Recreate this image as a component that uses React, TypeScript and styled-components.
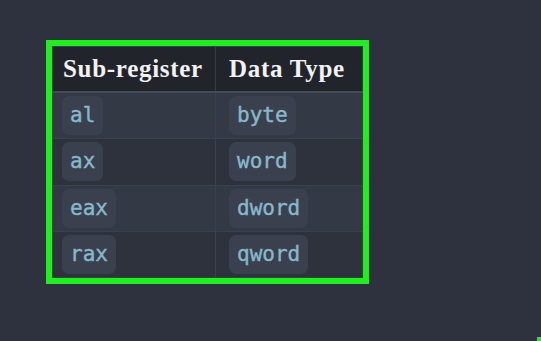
import styled, { createGlobalStyle } from "styled-components";

const GlobalStyle = createGlobalStyle`
  html, body {
    margin: 0;
    background: #2d323e;
  }
`;

const Page = styled.div`
  width: 541px;
  height: 341px;
  box-sizing: border-box;
  padding: 40px 0 0 46px;
  position: relative;
`;

const Frame = styled.div`
  display: inline-block;
  border: 6px solid #1cf21a;
`;

const Table = styled.table`
  border-collapse: collapse;
  border: 1px solid #3b4150;
`;

const HeadCell = styled.th<{ $first?: boolean }>`
  background: #21242b;
  color: #f2f2f2;
  font-family: "Liberation Serif", serif;
  font-weight: bold;
  font-size: 25px;
  letter-spacing: 0.7px;
  text-align: left;
  height: 44px;
  padding: 0 ${(p) => (p.$first ? "10px" : "12px 0 13px")};
  border-bottom: 2px solid #434a59;
  border-right: 1px solid #363c48;
  white-space: nowrap;
`;

const Row = styled.tr<{ $odd: boolean }>`
  background: ${(p) => (p.$odd ? "#343946" : "#2e323d")};
  border-bottom: 1px solid #3a404d;
`;

const Cell = styled.td<{ $first?: boolean }>`
  height: 45.3px;
  padding: 0 ${(p) => (p.$first ? "9px" : "13px")};
  border-right: 1px solid #3a404d;
  vertical-align: middle;
  width: ${(p) => (p.$first ? "144px" : "120px")};
`;

const Code = styled.code`
  display: inline-block;
  background: #3a404d;
  color: #86b9cb;
  font-family: "DejaVu Sans Mono", monospace;
  font-size: 21px;
  -webkit-text-stroke: 0.4px #86b9cb;
  line-height: 23px;
  padding: 8px 8px;
  border-radius: 7px;
`;

const Corner = styled.div`
  position: absolute;
  right: 0;
  bottom: 0;
  width: 4px;
  height: 4px;
  background: #1cf21a;
`;

const rows = [
  ["al", "byte"],
  ["ax", "word"],
  ["eax", "dword"],
  ["rax", "qword"],
];

export default function App() {
  return (
    <Page>
      <GlobalStyle />
      <Frame>
        <Table>
          <thead>
            <tr>
              <HeadCell $first>Sub-register</HeadCell>
              <HeadCell>Data Type</HeadCell>
            </tr>
          </thead>
          <tbody>
            {rows.map(([reg, type], i) => (
              <Row key={reg} $odd={i % 2 === 0}>
                <Cell $first>
                  <Code>{reg}</Code>
                </Cell>
                <Cell>
                  <Code>{type}</Code>
                </Cell>
              </Row>
            ))}
          </tbody>
        </Table>
      </Frame>
      <Corner />
    </Page>
  );
}
